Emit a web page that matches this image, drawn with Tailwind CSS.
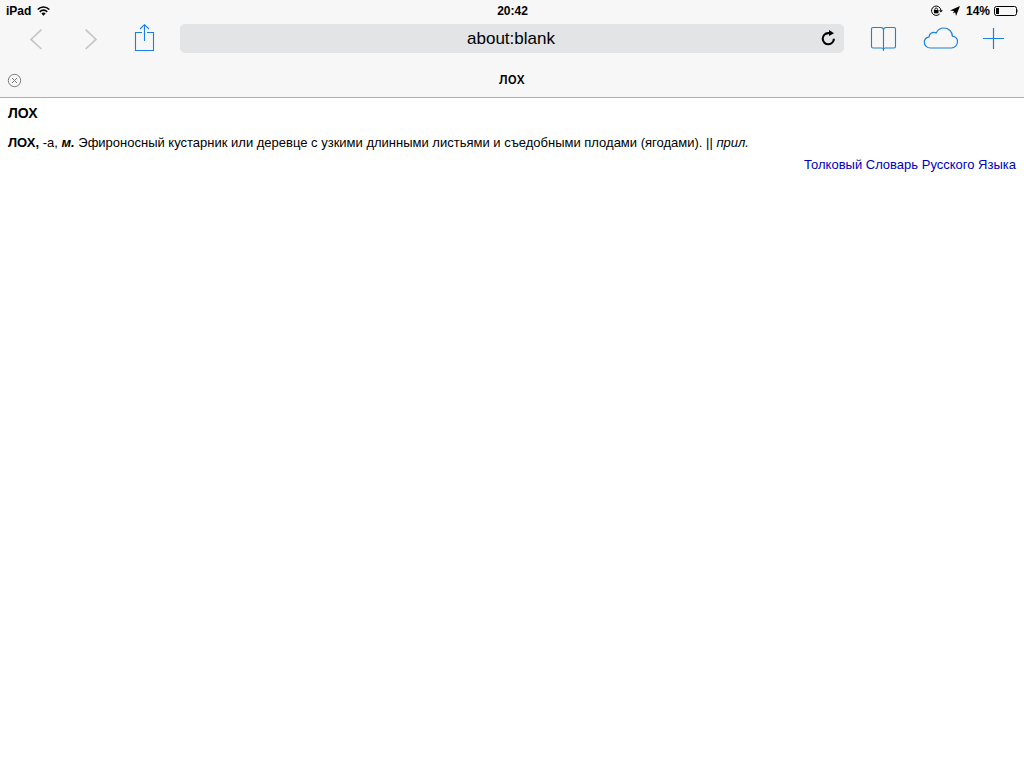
<!DOCTYPE html>
<html lang="ru">
<head>
  <meta charset="UTF-8">
  <meta name="viewport" content="width=device-width, initial-scale=1">
  <title>лох</title>
  <script src="https://cdn.jsdelivr.net/npm/@tailwindcss/browser@4"></script>
</head>
<body class="bg-white text-black min-h-screen font-['Liberation_Sans',Arial,sans-serif]">

  <header class="bg-[#f7f7f7] border-b border-[#aeaeae]">

    <!-- Status bar -->
    <div class="grid grid-cols-3 items-center h-[22px] pl-[6px] pr-[5px] text-[12px] font-bold">
      <div class="flex items-center gap-[6px]">
        <span>iPad</span>
        <svg class="w-[13px] h-[10px]" viewBox="0 0 14 10" fill="none" stroke="#000" stroke-width="1.8">
          <path d="M.8 3.4C4.4-.2 9.6-.2 13.2 3.4"/>
          <path d="M3 6C5.4 3.5 8.6 3.5 11 6"/>
          <path d="M7 10L4.7 7.6C6.1 6.4 7.9 6.4 9.3 7.6z" fill="#000" stroke="none"/>
        </svg>
      </div>
      <div class="text-center">20:42</div>
      <div class="flex items-center justify-end">
        <svg class="w-[12px] h-[12px] mr-[7px]" viewBox="0 0 12 12" fill="none" stroke="#000">
          <path d="M8.7 8.9A4.7 4.7 0 1 1 9.9 5.2" stroke-width="1"/>
          <path d="M7.9 5.2h4l-2 2.2z" fill="#000" stroke="none"/>
          <rect x="2.9" y="5" width="4.6" height="3.3" fill="#000" stroke="none"/>
          <path d="M3.9 5.4V4.3a1.3 1.3 0 0 1 2.6 0v1.1" stroke-width=".9"/>
        </svg>
        <svg class="w-[10px] h-[10px] mr-[6px]" viewBox="0 0 10 10">
          <path d="M10 0L6 10 5.2 6.2 3 7.5 4 5 0 4.4z" fill="#000"/>
        </svg>
        <span class="mr-[4px]">14%</span>
        <svg class="w-[25px] h-[10px]" viewBox="0 0 25 10" fill="none" stroke="#000">
          <rect x=".5" y=".5" width="22" height="9" rx="2"/>
          <rect x="2" y="2" width="3" height="6" fill="#000" stroke="none"/>
          <path d="M23.5 3v4q1.3-2 0-4z" fill="#000" stroke="none"/>
        </svg>
      </div>
    </div>

    <!-- Toolbar -->
    <div class="flex items-center h-[33px] pl-[29px] pr-[19px]">
      <div class="flex items-center">
        <button type="button" aria-label="Назад" class="mr-[41px]">
          <svg class="block w-[14px] h-[22px]" viewBox="0 0 14 22" fill="none" stroke="#c6c6c8" stroke-width="1.7"><path d="M12.4 1.6L2 11.4 12.4 21"/></svg>
        </button>
        <button type="button" aria-label="Вперёд" class="mr-[36px]">
          <svg class="block w-[14px] h-[22px]" viewBox="0 0 14 22" fill="none" stroke="#c6c6c8" stroke-width="1.7"><path d="M1.6 1.6L12 11.4 1.6 21"/></svg>
        </button>
        <button type="button" aria-label="Поделиться" class="mr-[25px]">
          <svg class="block w-[21px] h-[30px]" viewBox="0 0 21 30" fill="none" stroke="#1a7fe0" stroke-width="1.1">
            <path d="M8 8.5H1.5v18h18v-18H13"/>
            <path d="M10.5 17V.8M6 5l4.5-4.3L15 5"/>
          </svg>
        </button>
      </div>

      <form class="relative flex-1">
        <input type="text" aria-label="Адрес" value="about:blank" class="block w-full h-[29px] rounded-[5px] bg-[#e3e4e6] pr-[2px] text-center text-[17px] outline-none">
        <button type="button" aria-label="Обновить" class="absolute right-[8px] top-[6px]">
          <svg class="block w-[16px] h-[17px]" viewBox="0 0 16 17" fill="none" stroke="#000" stroke-width="2.1">
            <path d="M11 3.1H8.1A5.6 5.6 0 1 0 13.9 8.7"/>
            <path d="M9 0l5 3.2-5 2.9z" fill="#000" stroke="none"/>
          </svg>
        </button>
      </form>

      <div class="flex items-center">
        <button type="button" aria-label="Закладки" class="ml-[26px]">
          <svg class="block w-[27px] h-[26px]" viewBox="0 0 27 26" fill="none" stroke="#1a7fe0" stroke-width="1.1">
            <path d="M13.5 25V4.2c0-1.8-.8-2.7-2.6-2.7H3c-1 0-1.5.5-1.5 1.5v17.5c0 1 .5 1.5 1.5 1.5h8.6c1.2 0 1.9.4 1.9 1.5 0-1.1.7-1.5 1.9-1.5H24c1 0 1.5-.5 1.5-1.5V3c0-1-.5-1.5-1.5-1.5h-7.9c-1.8 0-2.6.9-2.6 2.7"/>
          </svg>
        </button>
        <button type="button" aria-label="Вкладки iCloud" class="ml-[26px]">
          <svg class="block w-[36px] h-[24px]" viewBox="0 0 36 24" fill="none" stroke="#1a7fe0" stroke-width="1.2">
            <path d="M7.5 21h20.8a6.3 6.3 0 0 0 6.2-6.2c0-3.1-2.1-5.3-5.1-5.7C29.2 4.4 25.3 1 20.9 1c-3.4 0-6.2 1.8-7.7 4.9-3.6-1.7-7.2.5-7.1 4C3.2 10.6 1.3 12.6 1.3 15.2c0 3.3 2.7 5.8 6.2 5.8z"/>
          </svg>
        </button>
        <button type="button" aria-label="Новая вкладка" class="ml-[23px]">
          <svg class="block w-[23px] h-[23px]" viewBox="0 0 23 23" stroke="#1a7fe0" stroke-width="1.2"><path d="M11.5 1v21M1 11.5h21"/></svg>
        </button>
      </div>
    </div>

    <!-- Tab -->
    <div class="flex items-center h-[42px] pt-[8px] px-[7px]">
      <button type="button" aria-label="Закрыть вкладку" class="h-[15px] mt-[1px]">
        <svg class="block w-[15px] h-[15px]" viewBox="0 0 15 15" fill="none" stroke="#7d7d7d">
          <circle cx="7.5" cy="7.5" r="6.2"/>
          <path d="M5 5l5 5M10 5l-5 5"/>
        </svg>
      </button>
      <div class="flex-1 pr-[15px] pb-[2px] text-center text-[15px] leading-[20px] font-medium font-['Inter',sans-serif]">лох</div>
    </div>
  </header>

  <main class="px-[8px] pt-[5px] text-[13px]">
    <h1 class="text-[14px] leading-[20px] font-bold">ЛОХ</h1>
    <p class="mt-[10px] leading-[20px]"><b>ЛОХ,</b> -а, <b><i>м.</i></b> Эфироносный кустарник или деревце с узкими длинными листьями и съедобными плодами (ягодами). || <i>прил.</i></p>
    <p class="mt-[2px] leading-[20px] text-right"><a href="#" class="text-[#0000c0]">Толковый Словарь Русского Языка</a></p>
  </main>

</body>
</html>
